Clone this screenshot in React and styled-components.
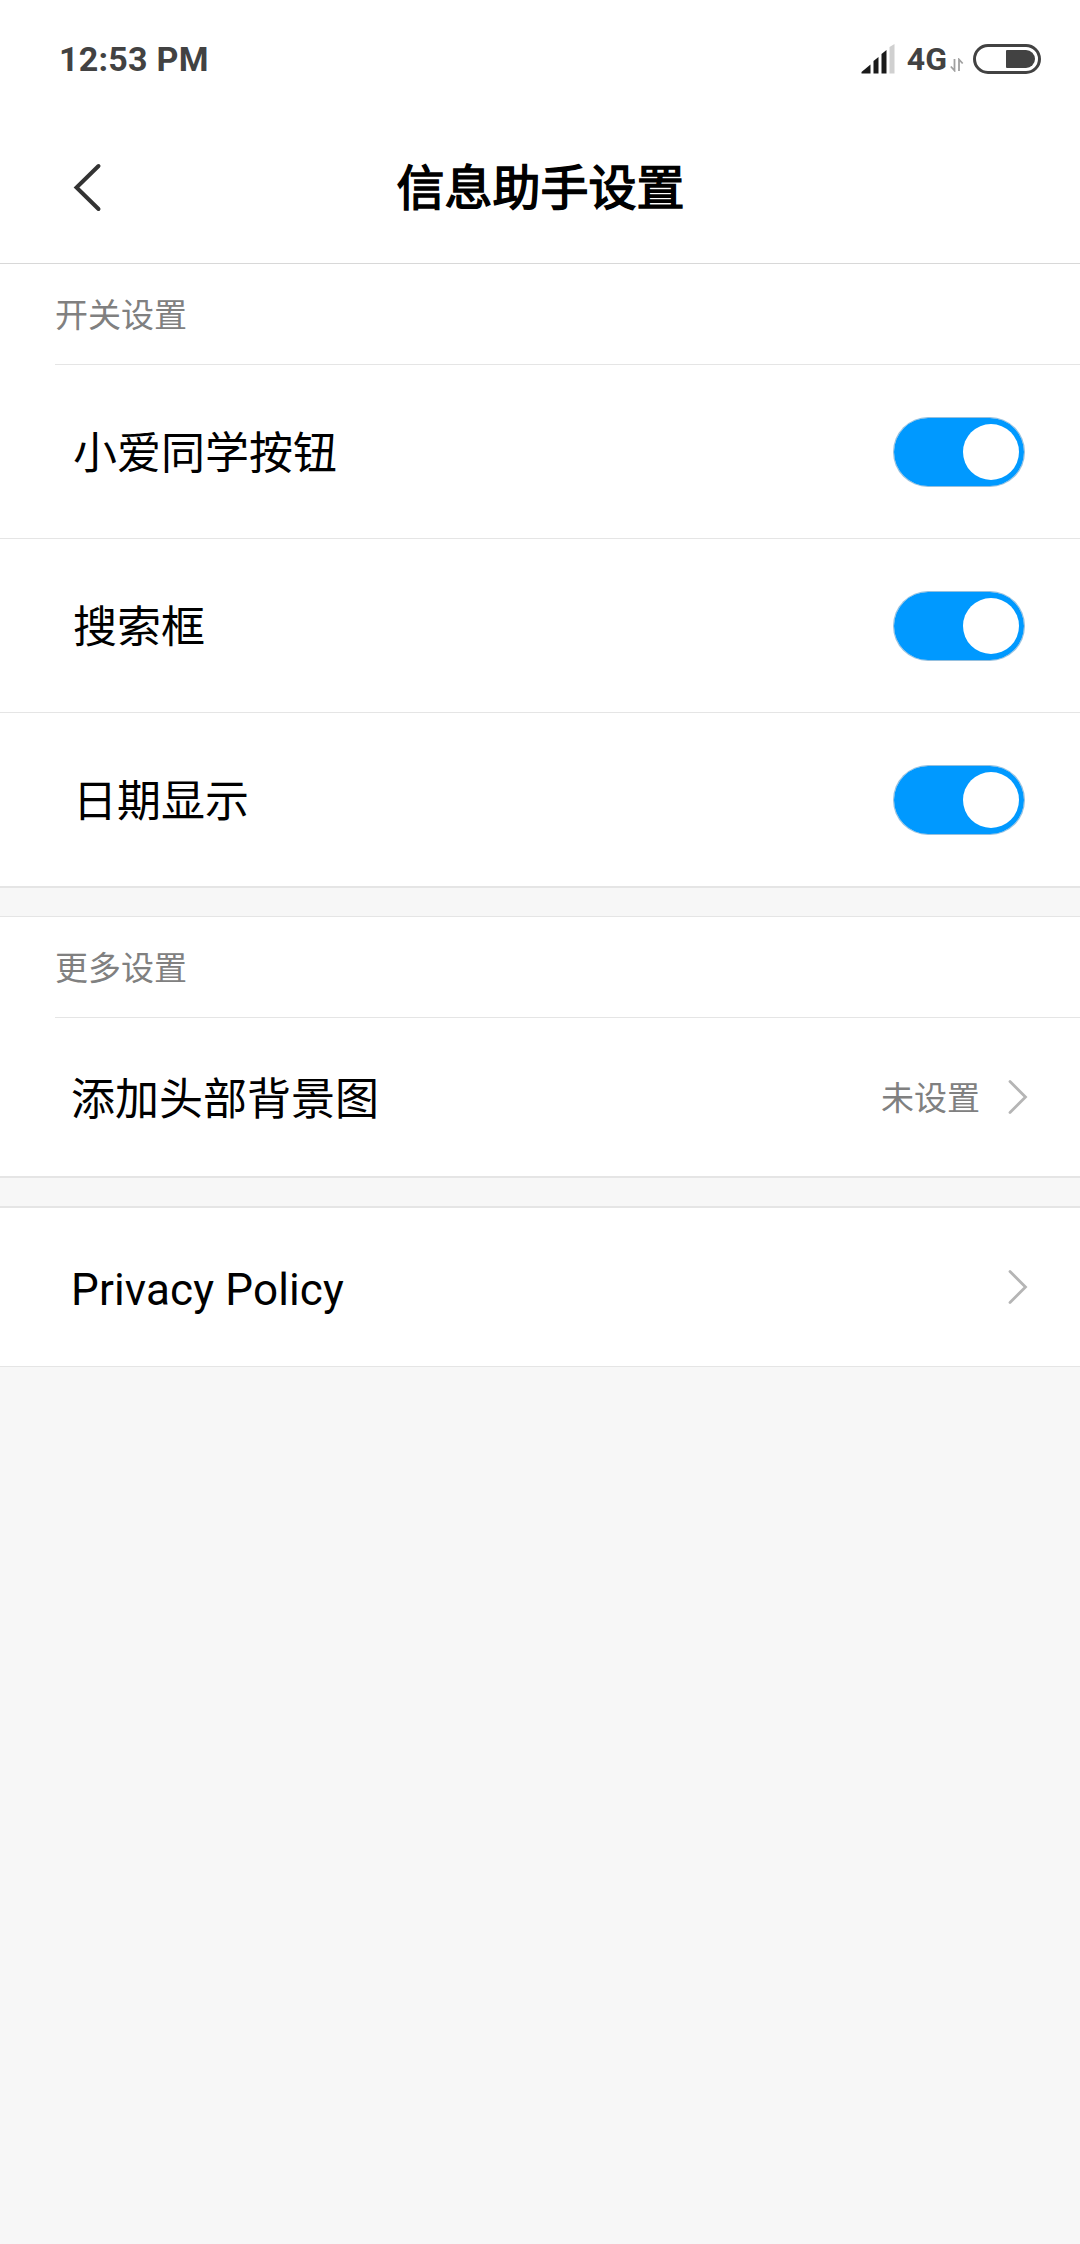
import React, { useState } from 'react';
import styled, { createGlobalStyle } from 'styled-components';

const GlobalStyle = createGlobalStyle`
  * {
    box-sizing: border-box;
  }

  body {
    margin: 0;
    background-color: #f7f7f7;
    font-family: Roboto, 'Noto Sans CJK SC', sans-serif;
    color: #000;
  }
`;

const PageContainer = styled.div`
  display: flex;
  flex-direction: column;
  width: 1080px;
  min-height: 2244px;
  background-color: #f7f7f7;
`;

const StatusBar = styled.div`
  display: flex;
  justify-content: space-between;
  align-items: center;
  height: 110px;
  padding: 8px 39px 0 59px;
  background-color: #fff;
  color: #424242;
`;

const Clock = styled.span`
  font-size: 34px;
  line-height: 40px;
  font-weight: 700;
  letter-spacing: 0.25px;
`;

const StatusIcons = styled.div`
  display: flex;
  align-items: center;
`;

const Network = styled.span`
  margin-left: 12px;
  font-size: 32px;
  line-height: 40px;
  font-weight: 700;
`;

const Header = styled.header`
  display: grid;
  grid-template-columns: 180px 1fr 180px;
  align-items: center;
  height: 154px;
  background-color: #fff;
  border-bottom: 1px solid #d8d8d8;
`;

const BackButton = styled.button`
  display: flex;
  padding: 0 0 0 72px;
  border: none;
  background: none;
  cursor: pointer;
`;

/* regular weight thickened with a stroke, the way Android fakes bold for CJK */
const Title = styled.h1`
  margin: 0;
  padding: 5px 0 0 1px;
  font-size: 48px;
  line-height: 70px;
  font-weight: 400;
  -webkit-text-stroke: 1.5px #000;
  text-align: center;
`;

const SectionLabel = styled.h2`
  display: flex;
  align-items: center;
  height: 101px;
  margin: 0 0 0 55px;
  padding-bottom: 2px;
  border-bottom: 1px solid #e5e5e5;
  font-size: 33px;
  font-weight: 400;
  color: #808080;
`;

const Section = styled.section`
  background-color: #fff;
`;

const Row = styled.div`
  display: flex;
  justify-content: space-between;
  align-items: center;
  height: ${({ $height }) => $height}px;
  padding: 0 ${({ $link }) => ($link ? 52 : 55)}px 0 ${({ $link }) => ($link ? 71 : 73)}px;
  border-top: ${({ $topLine }) => ($topLine ? '1px solid #e5e5e5' : 'none')};
  border-bottom: 1px solid #e5e5e5;
  cursor: pointer;
`;

const RowText = styled.span`
  padding-top: ${({ $shift }) => $shift || 0}px;
  font-size: 44px;
  line-height: 64px;
  letter-spacing: ${({ $spacing }) => $spacing || 0}px;
`;

const RowEnd = styled.div`
  display: flex;
  align-items: center;
  gap: 28px;
`;

const RowValue = styled.span`
  padding-top: 4px;
  font-size: 33px;
  line-height: 48px;
  color: #808080;
`;

const Gap = styled.div`
  height: 30px;
  border-top: 1px solid #e5e5e5;
  border-bottom: 1px solid #e5e5e5;
`;

const Switch = styled.button`
  display: flex;
  align-items: center;
  justify-content: ${({ $on }) => ($on ? 'flex-end' : 'flex-start')};
  width: 132px;
  height: 70px;
  padding: 0 5px;
  border: 1px solid rgba(80, 150, 200, 0.6);
  border-radius: 35px;
  background-color: ${({ $on }) => ($on ? '#0099ff' : '#e0e0e0')};
  background-clip: padding-box;
  cursor: pointer;
`;

const Knob = styled.span`
  width: 56px;
  height: 56px;
  border-radius: 50%;
  background-color: #fff;
`;

const SignalIcon = () => (
  <svg width="34" height="30" viewBox="0 0 34 30">
    <path d="M0.5 29.5V28L9.5 20.5V29.5Z" fill="#1a1a1a" />
    <path d="M12.5 29.5V17L17.5 13V29.5Z" fill="#1a1a1a" />
    <path d="M20.5 29.5V10L25.5 6V29.5Z" fill="#1a1a1a" />
    <path d="M28.5 29.5V3L33.5 0V29.5Z" fill="#d0d0d0" />
  </svg>
);

const DataArrows = styled.svg`
  margin: 12px 0 0 3px;
`;

const Battery = styled.svg`
  margin-left: 9px;
`;

const Chevron = () => (
  <svg width="20" height="36" viewBox="0 0 20 36" fill="none">
    <path d="M2 2.5L17.5 18L2 33.5" stroke="#b5b5b5" strokeWidth="2.8" strokeLinecap="round" />
  </svg>
);

const switches = [
  { key: 'xiaoai', label: '小爱同学按钮' },
  { key: 'search', label: '搜索框' },
  { key: 'date', label: '日期显示' },
];

const App = () => {
  const [enabled, setEnabled] = useState({ xiaoai: true, search: true, date: true });

  const toggle = (key) => {
    setEnabled({ ...enabled, [key]: !enabled[key] });
  };

  return (
    <PageContainer>
      <GlobalStyle />
      <StatusBar>
        <Clock>12:53 PM</Clock>
        <StatusIcons>
          <SignalIcon />
          <Network>4G</Network>
          <DataArrows width="14" height="14" viewBox="0 0 14 14" fill="none" stroke="#a0a0a0" strokeWidth="1.8">
            <path d="M4.5 1V12.5L0.8 8.5" />
            <path d="M9 13V1.5L12.7 5.5" />
          </DataArrows>
          <Battery width="68" height="30" viewBox="0 0 68 30">
            <rect x="1.5" y="1.5" width="65" height="27" rx="13.5" fill="none" stroke="#424242" strokeWidth="3" />
            <path d="M34 6H53A9 9 0 0 1 53 24H34Q33 24 33 23V7Q33 6 34 6Z" fill="#424242" />
          </Battery>
        </StatusIcons>
      </StatusBar>
      <Header>
        <BackButton aria-label="返回">
          <svg width="30" height="50" viewBox="0 0 30 50" fill="none">
            <path d="M26.5 4L4.5 25.5L26.5 47" stroke="#333" strokeWidth="4" strokeLinecap="round" />
          </svg>
        </BackButton>
        <Title>信息助手设置</Title>
      </Header>
      <Section>
        <SectionLabel>开关设置</SectionLabel>
        {switches.map(({ key, label }) => (
          <Row key={key} $height={174} onClick={() => toggle(key)}>
            <RowText $shift={4}>{label}</RowText>
            <Switch $on={enabled[key]} aria-label={label}>
              <Knob />
            </Switch>
          </Row>
        ))}
      </Section>
      <Gap />
      <Section>
        <SectionLabel>更多设置</SectionLabel>
        <Row $height={159} $link>
          <RowText $shift={5}>添加头部背景图</RowText>
          <RowEnd>
            <RowValue>未设置</RowValue>
            <Chevron />
          </RowEnd>
        </Row>
      </Section>
      <Gap />
      <Section>
        <Row $height={160} $link $topLine>
          <RowText $shift={6} $spacing={0.15}>Privacy Policy</RowText>
          <Chevron />
        </Row>
      </Section>
    </PageContainer>
  );
};

export default App;
